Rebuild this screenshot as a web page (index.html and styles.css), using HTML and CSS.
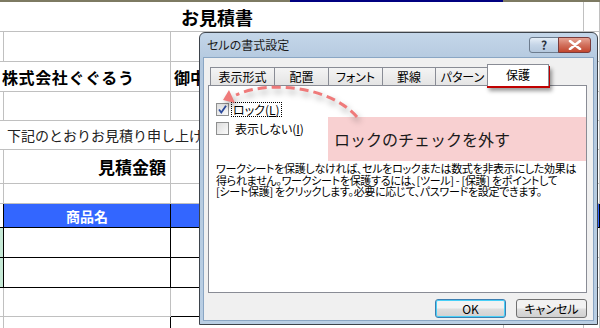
FILE: index.html
```html
<!DOCTYPE html>
<html lang="ja">
<head>
    <meta charset="UTF-8">
    <title>お見積書</title>
    <link rel="stylesheet" href="styles.css">
</head>
<body>
    <div class="sheet">
        <div class="topbar"></div>
        <div class="row r1">
            <div class="cell span3 title">お見積書</div>
            <div class="cell"></div>
            <div class="cell"></div>
        </div>
        <div class="row r2">
            <div class="cell"></div><div class="cell"></div><div class="cell"></div><div class="cell"></div><div class="cell"></div>
        </div>
        <div class="row r3">
            <div class="cell span2 company">株式会社ぐぐるう</div>
            <div class="cell onchu">御中</div>
            <div class="cell"></div><div class="cell"></div>
        </div>
        <div class="row r4">
            <div class="cell"></div><div class="cell"></div><div class="cell"></div><div class="cell"></div><div class="cell"></div>
        </div>
        <div class="row r5">
            <div class="cell span3 note">下記のとおりお見積り申し上げます。</div>
            <div class="cell"></div><div class="cell"></div>
        </div>
        <div class="row r6">
            <div class="cell"></div>
            <div class="cell amount">見積金額</div>
            <div class="cell"></div><div class="cell"></div><div class="cell"></div>
        </div>
        <div class="row r7">
            <div class="cell"></div><div class="cell"></div><div class="cell"></div><div class="cell"></div><div class="cell"></div>
        </div>
        <div class="row r8 head">
            <div class="cell"></div>
            <div class="cell">商品名</div>
            <div class="cell"></div><div class="cell"></div><div class="cell"></div>
        </div>
        <div class="row item">
            <div class="cell mark"></div><div class="cell"></div><div class="cell"></div><div class="cell"></div><div class="cell"></div>
        </div>
        <div class="row item">
            <div class="cell mark"></div><div class="cell"></div><div class="cell"></div><div class="cell"></div><div class="cell"></div>
        </div>
        <div class="row item last">
            <div class="cell"></div><div class="cell"></div><div class="cell"></div><div class="cell"></div><div class="cell"></div>
        </div>
        <div class="row r12">
            <div class="cell"></div><div class="cell"></div><div class="cell"></div><div class="cell"></div><div class="cell"></div>
        </div>
    </div>

    <div class="dialog">
        <div class="titlebar">
            <span>セルの書式設定</span>
            <div class="caption-buttons">
                <div class="cap help">?</div>
                <div class="cap close">
                    <svg width="14" height="10" viewBox="0 0 14 10"><path d="M2 1 L12 9 M12 1 L2 9" stroke="#fff" stroke-width="2.6" stroke-linecap="round"/></svg>
                </div>
            </div>
        </div>
        <div class="dlg-body">
            <div class="tabs">
                <div class="tab" style="width: 65px">表示形式</div>
                <div class="tab" style="width: 55px">配置</div>
                <div class="tab" style="width: 55px">フォント</div>
                <div class="tab" style="width: 54px">罫線</div>
                <div class="tab" style="width: 55px">パターン</div>
                <div class="tab selected">保護</div>
            </div>
            <div class="panel">
                <div class="check-row">
                    <span class="box">
                        <svg width="11" height="11" viewBox="0 0 11 11"><path d="M2 5.5 L4.3 8.5 L9 1.8" fill="none" stroke="#2b4a9c" stroke-width="1.8"/></svg>
                    </span>
                    <span class="label focus">ロック(<u>L</u>)</span>
                </div>
                <div class="check-row">
                    <span class="box"></span>
                    <span class="label">表示しない(<u>I</u>)</span>
                </div>
                <div class="desc">
                    <div class="line">ワークシートを保護しなければ、セルをロックまたは数式を非表示にした効果は</div>
                    <div class="line">得られません。ワークシートを保護するには、[ツール] - [保護] をポイントして</div>
                    <div class="line">[シート保護] をクリックします。必要に応じて、パスワードを設定できます。</div>
                </div>
            </div>
            <div class="buttons">
                <button class="btn default">OK</button>
                <button class="btn">キャンセル</button>
            </div>
        </div>
    </div>

    <div class="tab-mark"></div>
    <div class="callout">ロックのチェックを外す</div>
    <svg class="arrow" width="600" height="328" viewBox="0 0 600 328">
        <path d="M357 117 C330 86 268 80 236 95" fill="none" stroke="#ef7a7a" stroke-width="3" stroke-dasharray="9 5"/>
        <polygon points="223,100 235,103 229,90" fill="#ef7a7a"/>
    </svg>
</body>
</html>
```

FILE: styles.css
```css
body {
    margin: 0;
    width: 600px;
    height: 328px;
    overflow: hidden;
    background: #ffffff;
    font-family: "Noto Sans CJK JP", "Noto Sans", sans-serif;
    color: #000000;
    position: relative;
}
.topbar {
    height: 2px;
    background: linear-gradient(to right, #7d7a62 0 290px, #000080 290px 503px, #7d7a62 503px);
}
.row {
    display: grid;
    grid-template-columns: 4px 167px 333px 80px 1fr;
    box-sizing: border-box;
}
.cell {
    box-sizing: border-box;
    border-right: 1px solid #c0c0c0;
    border-bottom: 1px solid #c0c0c0;
    white-space: nowrap;
    overflow: visible;
    display: flex;
    align-items: center;
}
.span2 {
    grid-column: span 2;
}
.span3 {
    grid-column: span 3;
}
.r1 { height: 30px; }
.r2, .r3 { height: 30px; }
.r4, .r5 { height: 29px; }
.r6 { height: 34px; }
.r7 { height: 20px; }
.r8 { height: 24px; }
.item { height: 30px; }
.item.last { height: 29px; }
.r12 { height: 20px; }

.title {
    padding-left: 181px;
    font-size: 18px;
    font-weight: bold;
    border-right: none;
}
.r1 .cell:nth-child(2) {
    border-right: 1px solid #c0c0c0;
}
.company {
    padding-left: 2px;
    font-size: 16px;
    font-weight: bold;
    letter-spacing: 0.6px;
}
.onchu {
    padding-left: 3px;
    font-size: 16px;
    font-weight: bold;
}
.note {
    padding-left: 7px;
    font-size: 14px;
    color: #222222;
}
.amount {
    justify-content: flex-end;
    padding-right: 4px;
    font-size: 17px;
    font-weight: bold;
}
.head .cell {
    background: #3366ff;
    border-right-color: #000000;
    border-bottom-color: #000000;
    color: #ffffff;
    font-size: 14px;
    font-weight: bold;
    justify-content: center;
}
.head .cell:first-child {
    background: #ffffff;
}
.item .cell:nth-child(-n+3) {
    border-right-color: #000000;
    border-bottom-color: #000000;
}
.item .mark {
    background: #c6e9d6;
}
.item.last .cell:nth-child(-n+2) {
    border-bottom-color: #c0c0c0;
    border-right-color: #c0c0c0;
}
.r12 .cell:nth-child(2) {
    border-right-color: #000000;
}

/* ダイアログ */
.dialog {
    position: absolute;
    left: 199px;
    top: 32px;
    width: 399px;
    height: 293px;
    box-sizing: border-box;
    border: 1px solid #3d434b;
    border-radius: 6px 6px 0 0;
    background: linear-gradient(#c4d6e9, #b3c8de 30px, #b9cee3);
    padding: 0 3px 3px;
    display: flex;
    flex-direction: column;
    font-family: "Noto Sans CJK JP", sans-serif;
    font-size: 12px;
    font-feature-settings: "palt";
}
.titlebar {
    height: 24px;
    display: flex;
    justify-content: space-between;
    padding-left: 4px;
    color: #1a1a1a;
    line-height: 24px;
}
.caption-buttons {
    display: flex;
    padding-top: 4px;
    padding-right: 3px;
}
.cap {
    height: 16px;
    box-sizing: border-box;
    border: 1px solid #6d7c8e;
    display: flex;
    align-items: center;
    justify-content: center;
}
.help {
    width: 30px;
    border-radius: 3px 0 0 3px;
    background: linear-gradient(#e6eef7, #c5d5e7 50%, #b5c8dd);
    color: #2a3340;
    font-weight: bold;
    font-size: 12px;
    line-height: 14px;
}
.close {
    width: 33px;
    margin-left: -1px;
    border-color: #7a3b3b;
    border-radius: 0 3px 3px 0;
    background: linear-gradient(#e7a495, #d1705c 50%, #c2462f);
}
.dlg-body {
    flex: 1;
    background: #f0f0f0;
    border: 1px solid #8aa6c4;
    padding: 6px 6px 0 4px;
    display: flex;
    flex-direction: column;
}
.tabs {
    display: flex;
    align-items: flex-end;
    height: 21px;
    padding-left: 2px;
    position: relative;
    z-index: 1;
}
.tab {
    box-sizing: border-box;
    height: 18px;
    margin-right: -1px;
    border: 1px solid #898c95;
    border-bottom: none;
    background: linear-gradient(#f4f4f4, #e4e4e4);
    text-align: center;
    line-height: 17px;
    color: #000000;
}
.tab.selected {
    width: 62px;
    height: 22px;
    margin-left: -2px;
    margin-bottom: -1px;
    background: #ffffff;
    line-height: 20px;
}
.panel {
    box-sizing: border-box;
    height: 208px;
    border: 1px solid #898c95;
    background: #ffffff;
    padding: 16px 0 0 7px;
}
.check-row {
    display: flex;
    align-items: center;
    height: 14px;
    margin-bottom: 5px;
}
.box {
    box-sizing: border-box;
    width: 13px;
    height: 13px;
    border: 1px solid #8e8f8f;
    background: linear-gradient(135deg, #dcdcdc, #fbfbfb);
    display: flex;
    align-items: center;
    justify-content: center;
    margin-right: 4px;
}
.label {
    line-height: 13px;
    padding: 0 1px;
    margin-left: 1px;
}
.label.focus {
    outline: 1px dotted #000000;
    margin-left: -1px;
}
.desc {
    margin-top: 28px;
    font-size: 11px;
    letter-spacing: -0.3px;
    color: #000000;
}
.desc .line {
    height: 11.5px;
    line-height: 11px;
    white-space: nowrap;
}
.buttons {
    display: flex;
    justify-content: flex-end;
    gap: 10px;
    margin-top: 6px;
}
.btn {
    box-sizing: border-box;
    width: 71px;
    height: 19px;
    padding: 0;
    border: 1px solid #707070;
    border-radius: 3px;
    background: linear-gradient(#f2f2f2 45%, #dddddd 55%, #d0d0d0);
    font-family: "Noto Sans CJK JP", sans-serif;
    font-size: 12px;
    line-height: 17px;
    font-feature-settings: "palt";
    color: #000000;
}
.btn.default {
    border-color: #3c7fb1;
    box-shadow: inset 0 0 0 1px #48d0f8;
}

/* 注釈 */
.tab-mark {
    position: absolute;
    left: 487px;
    top: 66px;
    width: 63px;
    height: 22px;
    box-sizing: border-box;
    border: 3px solid #c00000;
    box-shadow: 2px 3px 4px rgba(0, 0, 0, 0.4);
}
.callout {
    position: absolute;
    left: 328px;
    top: 117px;
    width: 258px;
    height: 44px;
    box-sizing: border-box;
    padding-left: 6px;
    background: #f8d0d1;
    font-family: "Noto Sans CJK JP", sans-serif;
    font-size: 16px;
    line-height: 44px;
    color: #1a1a1a;
}
.arrow {
    position: absolute;
    left: 0;
    top: 0;
    pointer-events: none;
    filter: drop-shadow(2px 4px 3px rgba(0, 0, 0, 0.35));
}
```
